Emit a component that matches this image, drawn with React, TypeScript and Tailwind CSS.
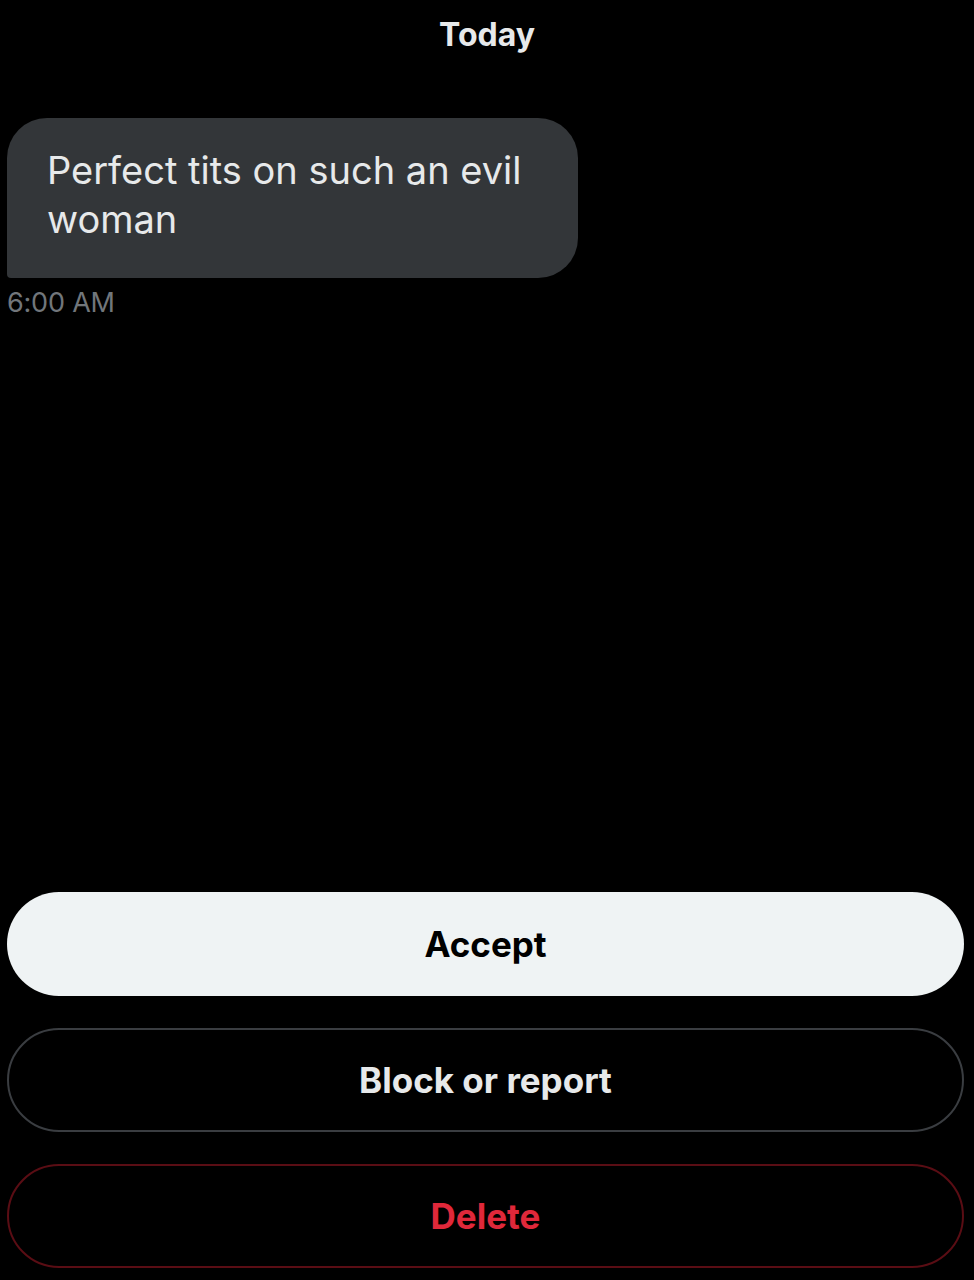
export default function App() {
  return (
    <main
      className="h-[1280px] w-full bg-black flex flex-col px-[7px] pb-[12px] text-[#e7e9ea]"
      style={{ fontFamily: "Inter, Roboto, 'Liberation Sans', sans-serif" }}
    >
      {/* Date header */}
      <div className="pt-[16px] text-center text-[32px] font-bold leading-[38px] text-[#e7e9ea]">
        Today
      </div>

      {/* Incoming message */}
      <div className="mt-[64px] flex flex-col items-start">
        <div className="w-[571px] h-[160px] bg-[#333639] rounded-[40px] rounded-bl-[4px] pl-[40px] pr-[30px] pt-[28px]">
          <p className="text-[38px] leading-[49px] text-[#e7e9ea]">
            Perfect tits on such an evil woman
          </p>
        </div>
        <span className="mt-[9px] text-[27px] leading-[32px] tracking-[-0.2px] text-[#71767b]">
          6:00 AM
        </span>
      </div>

      {/* Actions */}
      <div className="mt-auto flex flex-col gap-[32px] pr-[3px]">
        <button className="h-[104px] w-full rounded-full bg-[#eff3f4] text-black text-[35px] font-bold">
          Accept
        </button>
        <button className="h-[104px] w-full rounded-full border-2 border-[#3a3d41] text-[#e7e9ea] text-[35px] font-bold">
          Block or report
        </button>
        <button className="h-[104px] w-full rounded-full border-2 border-[#5a0d14] text-[#e0283a] text-[35px] font-bold">
          Delete
        </button>
      </div>
    </main>
  );
}
